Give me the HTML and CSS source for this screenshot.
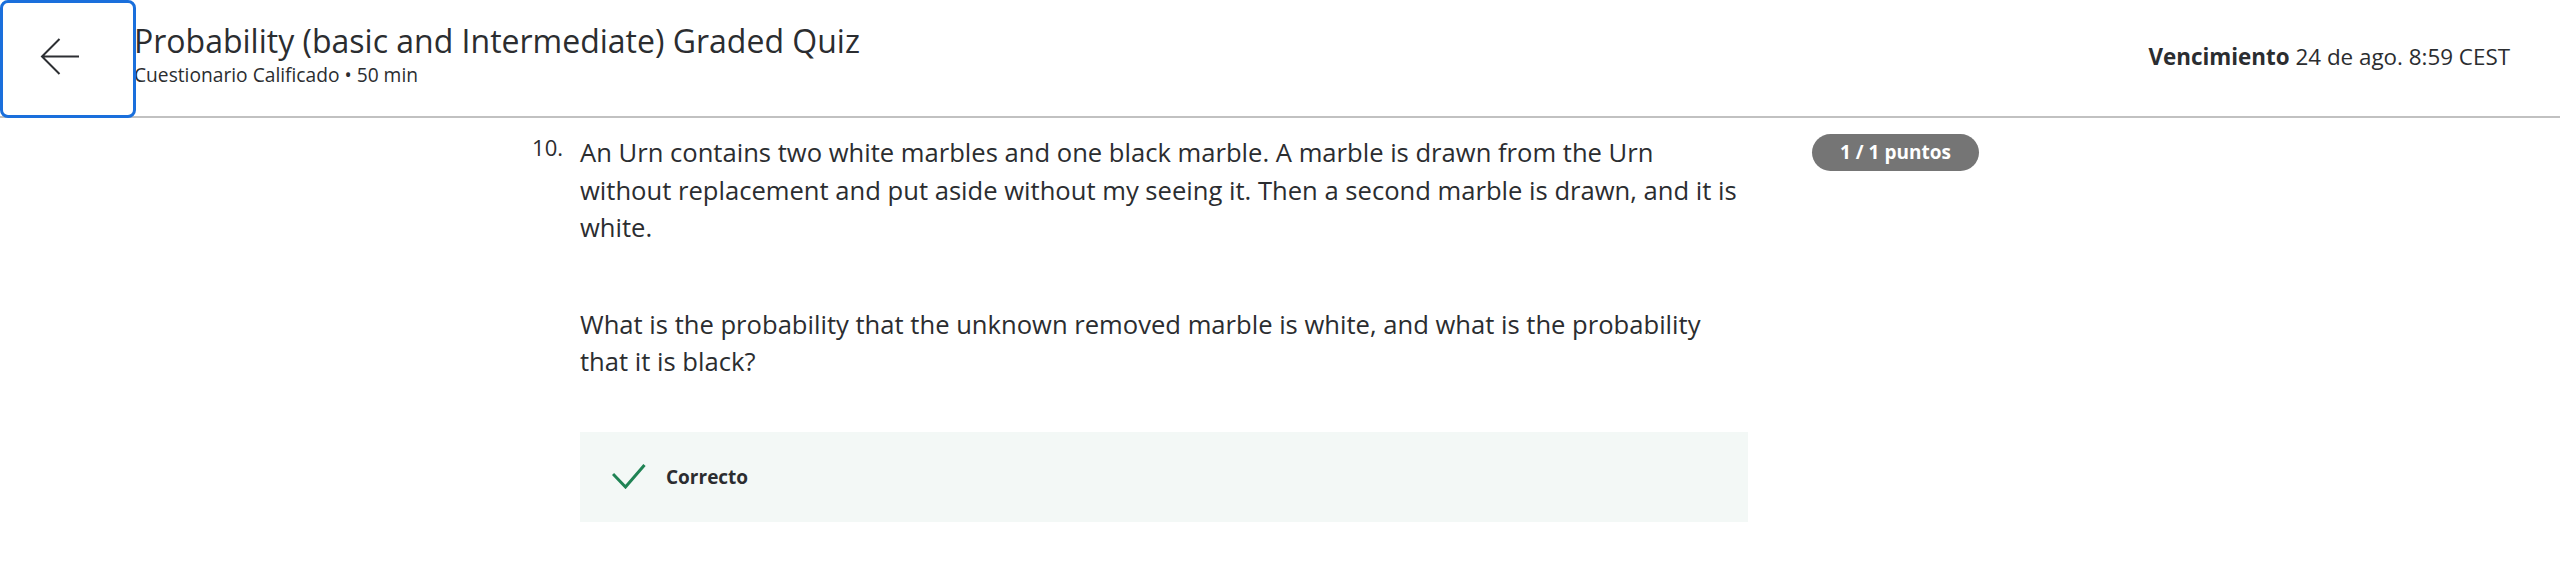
FILE: index.html
```html
<!DOCTYPE html>
<html lang="es">
<head>
<meta charset="utf-8">
<title>Probability (basic and Intermediate) Graded Quiz</title>
<link rel="stylesheet" href="styles.css">
</head>
<body>
<header class="topbar">
  <button class="back-btn" aria-label="Volver">
    <svg class="back-icon" width="40" height="40" viewBox="0 0 40 40" aria-hidden="true">
      <path d="M39 18.5H2 M19.5 1 L2 18.5 L19.5 36" fill="none" stroke="#2d2f33" stroke-width="2" stroke-linecap="butt" stroke-linejoin="miter"/>
    </svg>
  </button>
  <div class="titles">
    <h1 class="title">Probability (basic and Intermediate) Graded Quiz</h1>
    <div class="subtitle">Cuestionario Calificado • 50 min</div>
  </div>
  <div class="due"><strong>Vencimiento</strong> 24 de ago. 8:59 CEST</div>
</header>
<main class="question">
  <div class="qnum">10.</div>
  <div class="qbody">
    <p class="qtext">An Urn contains two white marbles and one black marble. A marble is drawn from the Urn without replacement and put aside without my seeing it. Then a second marble is drawn, and it is white.</p>
    <p class="qtext second">What is the probability that the unknown removed marble is white, and what is the probability that it is black?</p>
    <div class="result">
      <svg class="check" width="34" height="26" viewBox="0 0 34 26" aria-hidden="true">
        <polyline points="1,11 13.5,24 32.5,2" fill="none" stroke="#1f8354" stroke-width="3"/>
      </svg>
      <span class="result-label">Correcto</span>
    </div>
  </div>
  <div class="badge">1 / 1 puntos</div>
</main>
</body>
</html>
```

FILE: styles.css
```css
html, body {
  margin: 0;
  padding: 0;
  background: #ffffff;
}
body {
  font-family: "Open Sans", "Liberation Sans", sans-serif;
  color: #1f1f1f;
}
.topbar {
  display: flex;
  align-items: flex-start;
  height: 116px;
  border-bottom: 2px solid #c1c1c1;
}
.back-btn {
  position: relative;
  z-index: 1;
  flex: 0 0 auto;
  box-sizing: border-box;
  width: 136px;
  height: 118px;
  margin: 0;
  padding: 0 16px 2px 0;
  border: 3px solid #1a6fdc;
  border-radius: 8px;
  background: #ffffff;
  display: flex;
  align-items: center;
  justify-content: center;
}
.back-icon {
  display: block;
}
.titles {
  margin-left: -2px;
  padding-top: 20px;
  flex: 1 1 auto;
}
.title {
  margin: 0;
  font-size: 32px;
  line-height: 41px;
  font-weight: 400;
  color: #2b2d30;
}
.subtitle {
  margin-top: 1px;
  font-size: 19.2px;
  line-height: 26px;
  color: #2b2d30;
}
.due {
  padding-top: 42px;
  padding-right: 50px;
  font-size: 22.4px;
  line-height: 30px;
  color: #2b2d30;
  white-space: nowrap;
}
.due strong {
  font-weight: 700;
}
.question {
  display: flex;
  align-items: flex-start;
  padding: 16px 0 0 519px;
}
.qnum {
  width: 44px;
  text-align: right;
  font-size: 22px;
  line-height: 26px;
  color: #2b2d30;
}
.qbody {
  width: 1168px;
  margin-left: 17px;
}
.qtext {
  margin: 0;
  max-width: 1158px;
  font-size: 25.6px;
  line-height: 37.5px;
  color: #2b2d30;
}
.qtext.second {
  margin-top: 59px;
}
.result {
  margin-top: 51px;
  height: 90px;
  background: #f3f8f6;
  display: flex;
  align-items: center;
  padding-left: 32px;
  gap: 20px;
}
.check {
  display: block;
  margin-top: -2px;
}
.result-label {
  font-size: 19px;
  font-weight: 700;
  color: #2b2d30;
}
.badge {
  margin-left: 64px;
  height: 37px;
  line-height: 37px;
  padding: 0 28px;
  border-radius: 19px;
  background: #757575;
  color: #ffffff;
  font-size: 19px;
  font-weight: 700;
  white-space: nowrap;
}
```
